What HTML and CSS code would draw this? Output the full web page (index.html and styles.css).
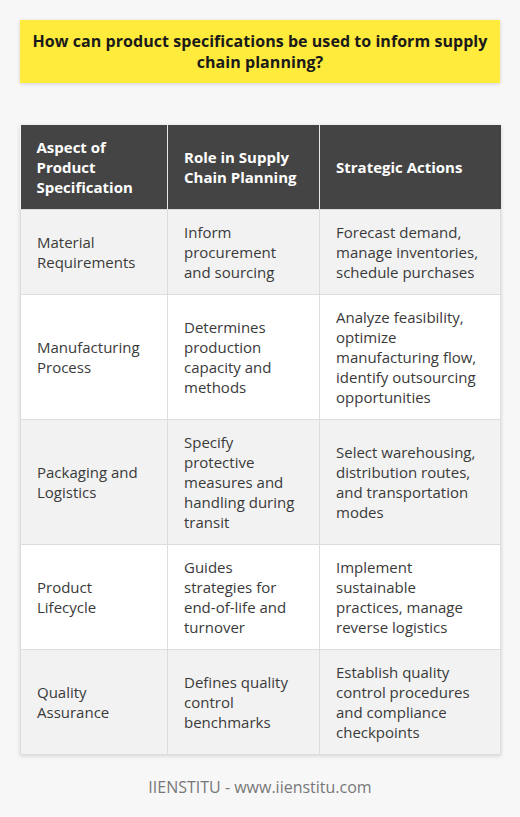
FILE: index.html
```html
<!DOCTYPE html>
<html>
<head>
<meta charset="utf-8">
<link rel="stylesheet" href="styles.css">
</head>
<body>
<div class="page">
  <div class="title">How can product specifications be used to inform supply chain planning?</div>
  <table class="spec">
    <colgroup>
      <col class="c1">
      <col class="c2">
      <col class="c3">
    </colgroup>
    <thead>
      <tr>
        <th>Aspect of Product Specification</th>
        <th>Role in Supply Chain Planning</th>
        <th>Strategic Actions</th>
      </tr>
    </thead>
    <tbody>
      <tr>
        <td>Material Requirements</td>
        <td>Inform procurement and sourcing</td>
        <td>Forecast demand, manage inventories, schedule purchases</td>
      </tr>
      <tr>
        <td>Manufacturing Process</td>
        <td>Determines production capacity and methods</td>
        <td>Analyze feasibility, optimize manufacturing flow, identify outsourcing opportunities</td>
      </tr>
      <tr>
        <td>Packaging and Logistics</td>
        <td>Specify protective measures and handling during transit</td>
        <td>Select warehousing, distribution routes, and transportation modes</td>
      </tr>
      <tr>
        <td>Product Lifecycle</td>
        <td>Guides strategies for end-of-life and turnover</td>
        <td>Implement sustainable practices, manage reverse logistics</td>
      </tr>
      <tr>
        <td>Quality Assurance</td>
        <td>Defines quality control benchmarks</td>
        <td>Establish quality control procedures and compliance checkpoints</td>
      </tr>
    </tbody>
  </table>
  <div class="footer">IIENSTITU - www.iienstitu.com</div>
</div>
</body>
</html>
```

FILE: styles.css
```css
html, body {
  margin: 0;
  padding: 0;
  background: #f7f7f7;
}
body {
  font-family: "Open Sans", "Liberation Sans", sans-serif;
  color: #333;
}
.page {
  padding: 20px 20px 0 20px;
}
.title {
  background: #ffeb3b;
  color: #1a1a1a;
  font-weight: 700;
  font-size: 16px;
  letter-spacing: 0.05px;
  line-height: 21px;
  text-align: center;
  padding: 11px 8px 10px;
  box-shadow: 0 1px 4px rgba(0,0,0,0.15);
}
.spec {
  margin-top: 42px;
  width: 480px;
  table-layout: fixed;
  border-collapse: collapse;
  box-shadow: 0 1px 4px rgba(0,0,0,0.15);
  font-size: 15px;
  line-height: 20px;
}
.c1 { width: 147px; }
.c2 { width: 152px; }
.c3 { width: 181px; }
.spec th {
  background: #444444;
  color: #ffffff;
  font-weight: 700;
  text-align: left;
  padding: 12px 16px;
  border-left: 1px solid #e8e8e8;
}
.spec th:first-child { border-left: none; }
.spec td {
  padding: 12px 16px;
  border: 1px solid #dddddd;
  vertical-align: middle;
  color: #3a3a3a;
}
.spec tbody tr:nth-child(odd) td { background: #f2f2f2; }
.spec tbody tr:nth-child(even) td { background: #ffffff; }
.footer {
  text-align: center;
  color: #777;
  font-size: 16px;
  padding-top: 21px;
}
```
